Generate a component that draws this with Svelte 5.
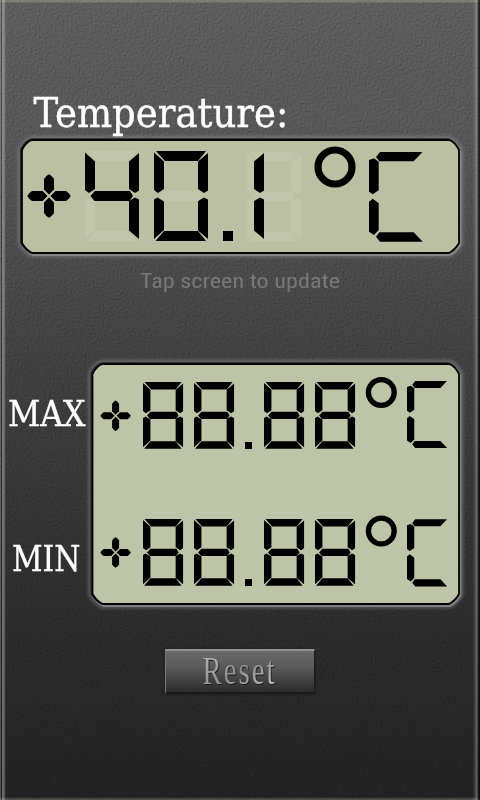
<script>
  const SEGMENTS = {
    a: '2,0 52,0 44,10 11,10',
    b: '54,2 54,39.5 50,42 44,38 44,10.5',
    c: '44,50 50,46.5 54,48.5 54,88 44,79.5',
    d: '10,80 44,80 52,90 1.5,90',
    e: '3.5,46.5 10,50.5 10,79 0,88 0,48.5',
    f: '0,1.5 10,10.5 10,38 4,42 0,39',
    g: '5.5,45 10,40 45,40 48,45 44.5,50 9.5,50'
  };
  const LETTER_C = [
    '7,5 11,0 53.5,0 44.7,9.3 10.3,9.3',
    '0,8 5,6.3 9.7,9.7 9.7,38.3 3.7,42.3 0,39.7',
    '0,49.7 3.7,46.7 9.7,51.3 9.7,78 5,83 0,79.7',
    '7,84.7 10.3,80.3 44.7,80.3 53.7,89.7 11,89.7'
  ];
  const rows = [
    { y: 382, degree: 392.5, unit: 381, sign: 415.8 },
    { y: 519, degree: 531, unit: 519.3, sign: 552.5 }
  ];
</script>

{#snippet digit(x, y, on, scale, ghost)}
  <g transform="translate({x} {y}) scale({scale})">
    {#each Object.entries(SEGMENTS) as [name, points]}
      {#if on.includes(name)}
        <polygon {points} />
      {:else if ghost}
        <polygon class="ghost" {points} />
      {/if}
    {/each}
  </g>
{/snippet}

{#snippet plus(x, y, scale)}
  <g transform="translate({x} {y}) scale({scale})">
    {#each [0, 90, 180, 270] as turn}
      <polygon
        points="-21.7,0 -20,-2.6 -17,-5 -6.5,-5 -1.5,0 -6.5,5 -17,5 -20,2.6"
        transform="rotate({turn})"
      />
    {/each}
  </g>
{/snippet}

{#snippet celsius(x, y, scale)}
  <g transform="translate({x} {y}) scale({scale})">
    {#each LETTER_C as points}
      <polygon {points} />
    {/each}
  </g>
{/snippet}

{#snippet frame(x, y, w, h, fill)}
  {@const outline = `M${x + 10} ${y}H${x + w - 10}Q${x + w - 4} ${y + 2} ${x + w} ${y + 10}V${y + h - 10}Q${x + w - 4} ${y + h - 3} ${x + w - 10} ${y + h}H${x + 10}Q${x + 4} ${y + h - 3} ${x} ${y + h - 10}V${y + 10}Q${x + 4} ${y + 2} ${x + 10} ${y}Z`}
  <path d={outline} class="glow" />
  <path d={outline} class="rim" />
  <path d={outline} class="shade" />
  <path d={outline} {fill} stroke="#050505" stroke-width="1.8" />
{/snippet}

<main>
  <svg class="leather" viewBox="0 0 480 800" aria-hidden="true">
    <filter id="grain" x="0" y="0" width="100%" height="100%" color-interpolation-filters="sRGB">
      <feTurbulence type="fractalNoise" baseFrequency="0.5" numOctaves="2" seed="4" />
      <feColorMatrix values="0 0 0 0 0  0 0 0 0 0  0 0 0 0 0  1 0 0 0 0" />
      <feDiffuseLighting surfaceScale="1.4" diffuseConstant="0.7" lighting-color="#fff">
        <feDistantLight azimuth="225" elevation="45" />
      </feDiffuseLighting>
    </filter>
    <rect width="480" height="800" filter="url(#grain)" />
  </svg>

  <svg class="title" viewBox="0 90 480 43">
    <text x="33.5" y="126.5" font-size="40.5" textLength="255" lengthAdjust="spacingAndGlyphs">Temperature:</text>
  </svg>

  <svg class="current" viewBox="0 133 480 130">
    {@render frame(22, 140, 437, 113, '#bcc0a2')}
    {@render plus(49, 196, 1)}
    {@render digit(85, 151, 'bcfg', 1, true)}
    {@render digit(154, 151, 'abcdef', 1, true)}
    <rect x="223" y="231" width="10" height="10" />
    {@render digit(247, 151.5, '', 1, true)}
    {@render digit(210, 151, 'bc', 1, false)}
    <circle cx="335" cy="167" r="17" stroke-width="7.2" />
    {@render celsius(369, 152, 1)}
  </svg>

  <svg class="hint" viewBox="0 263 480 37">
    <text x="140" y="288" font-size="21" textLength="200" lengthAdjust="spacingAndGlyphs">Tap screen to update</text>
  </svg>

  <section>
    <svg class="labels" viewBox="0 355 85 260">
      <text x="8" y="426" font-size="35.5" textLength="77.5" lengthAdjust="spacingAndGlyphs">MAX</text>
      <text x="12" y="571" font-size="35.5" textLength="68.5" lengthAdjust="spacingAndGlyphs">MIN</text>
    </svg>
    <svg class="records" viewBox="85 355 395 260">
      {@render frame(92.5, 364, 366.5, 240, '#bec4a8')}
      {#each rows as row}
        {@render plus(115.6, row.sign, 0.7)}
        {#each [143, 194, 264, 315] as x}
          {@render digit(x, row.y, 'abcdefg', 0.742, false)}
        {/each}
        <rect x="245" y={row.y + 60} width="7" height="7" />
        <circle cx="381.3" cy={row.degree} r="12.9" stroke-width="5.3" />
        {@render celsius(407, row.unit, 0.748)}
      {/each}
    </svg>
  </section>

  <button>
    <svg viewBox="165 649 149 44">
      <defs>
        <linearGradient id="metal" x1="0" y1="0" x2="1" y2="1">
          <stop offset="0" stop-color="#b8b8b8" />
          <stop offset="0.5" stop-color="#8e8e8e" />
          <stop offset="1" stop-color="#c4c4c4" />
        </linearGradient>
      </defs>
      <g transform="translate(202.5 684) scale(0.72 1)">
        <text x="0" y="0" font-size="40" textLength="100" fill="url(#metal)">Reset</text>
      </g>
    </svg>
  </button>
</main>

<style>
  :global(body) {
    margin: 0;
  }
  main {
    position: relative;
    display: flex;
    flex-direction: column;
    align-items: center;
    box-sizing: border-box;
    width: 480px;
    height: 800px;
    padding-top: 90px;
    overflow: hidden;
    background: linear-gradient(#5e5e5e, #585858 15%, #494949 35%, #3b3b3b 53%, #2c2c2c 78%, #222 100%);
  }
  main::after {
    content: '';
    position: absolute;
    inset: 0;
    pointer-events: none;
    background:
      linear-gradient(90deg, rgba(190, 195, 185, 0.3) 0 1px, rgba(10, 10, 10, 0.2) 1px 2px, rgba(200, 200, 200, 0.42) 2px 4px, rgba(200, 200, 200, 0.15) 5px, transparent 6px),
      linear-gradient(270deg, rgba(0, 5, 0, 0.7) 0 1px, rgba(30, 35, 30, 0.5) 2px, rgba(190, 190, 190, 0.42) 3px, rgba(190, 190, 190, 0.2) 5px, transparent 7px),
      linear-gradient(rgba(160, 165, 145, 0.45) 0 2px, transparent 3px),
      linear-gradient(0deg, rgba(120, 125, 110, 0.5) 0 1px, rgba(100, 105, 90, 0.3) 2px, transparent 3px);
  }
  svg {
    position: relative;
    display: block;
    flex: none;
  }
  .leather {
    position: absolute;
    inset: 0;
    width: 480px;
    height: 800px;
    mix-blend-mode: overlay;
    opacity: 0.25;
  }
  .title {
    width: 480px;
    height: 43px;
    overflow: visible;
    z-index: 1;
  }
  .current {
    width: 480px;
    height: 130px;
  }
  .hint {
    width: 480px;
    height: 37px;
    margin-bottom: 55px;
  }
  section {
    display: flex;
    flex: none;
    width: 480px;
  }
  .labels {
    width: 85px;
    height: 260px;
    overflow: visible;
    z-index: 1;
  }
  .records {
    width: 395px;
    height: 260px;
  }
  text {
    font-family: 'DejaVu Serif Condensed', 'DejaVu Serif', serif;
    font-stretch: condensed;
  }
  .title text,
  .labels text {
    fill: #fff;
    stroke: #fff;
    stroke-width: 0.35;
  }
  .hint text {
    font-family: Roboto, sans-serif;
    fill: #787878;
  }
  .glow {
    fill: none;
    stroke: #8b8b8b;
    stroke-width: 9;
    opacity: 0.45;
    filter: blur(1.5px);
  }
  .rim {
    fill: none;
    stroke: #999;
    stroke-width: 3;
    transform: translate(1px, 1.4px);
    opacity: 0.6;
  }
  .shade {
    fill: none;
    stroke: #111;
    stroke-width: 2.4;
    transform: translate(-0.8px, -0.6px);
    opacity: 0.75;
  }
  polygon,
  .current rect,
  .records rect {
    fill: #000;
  }
  circle {
    fill: none;
    stroke: #000;
  }
  .ghost {
    fill: #c1c5ab;
  }
  button {
    position: relative;
    flex: none;
    width: 150px;
    height: 45px;
    margin: 34px 0 0;
    padding: 0;
    border: 1px solid #1b1b1b;
    border-top: 2px solid #929292;
    border-left-color: #777;
    border-bottom-width: 2px;
    background: linear-gradient(#696969, #5c5c5c 35%, #2c2c2c);
    box-shadow: 0 0 2px #181818;
  }
  button svg {
    width: 149px;
    height: 44px;
    margin: -2px 0 0 -1px;
  }
  button text {
    font-family: 'Liberation Serif', serif;
    filter: drop-shadow(1.2px 1px 0.5px #1b1b1b);
  }
</style>
